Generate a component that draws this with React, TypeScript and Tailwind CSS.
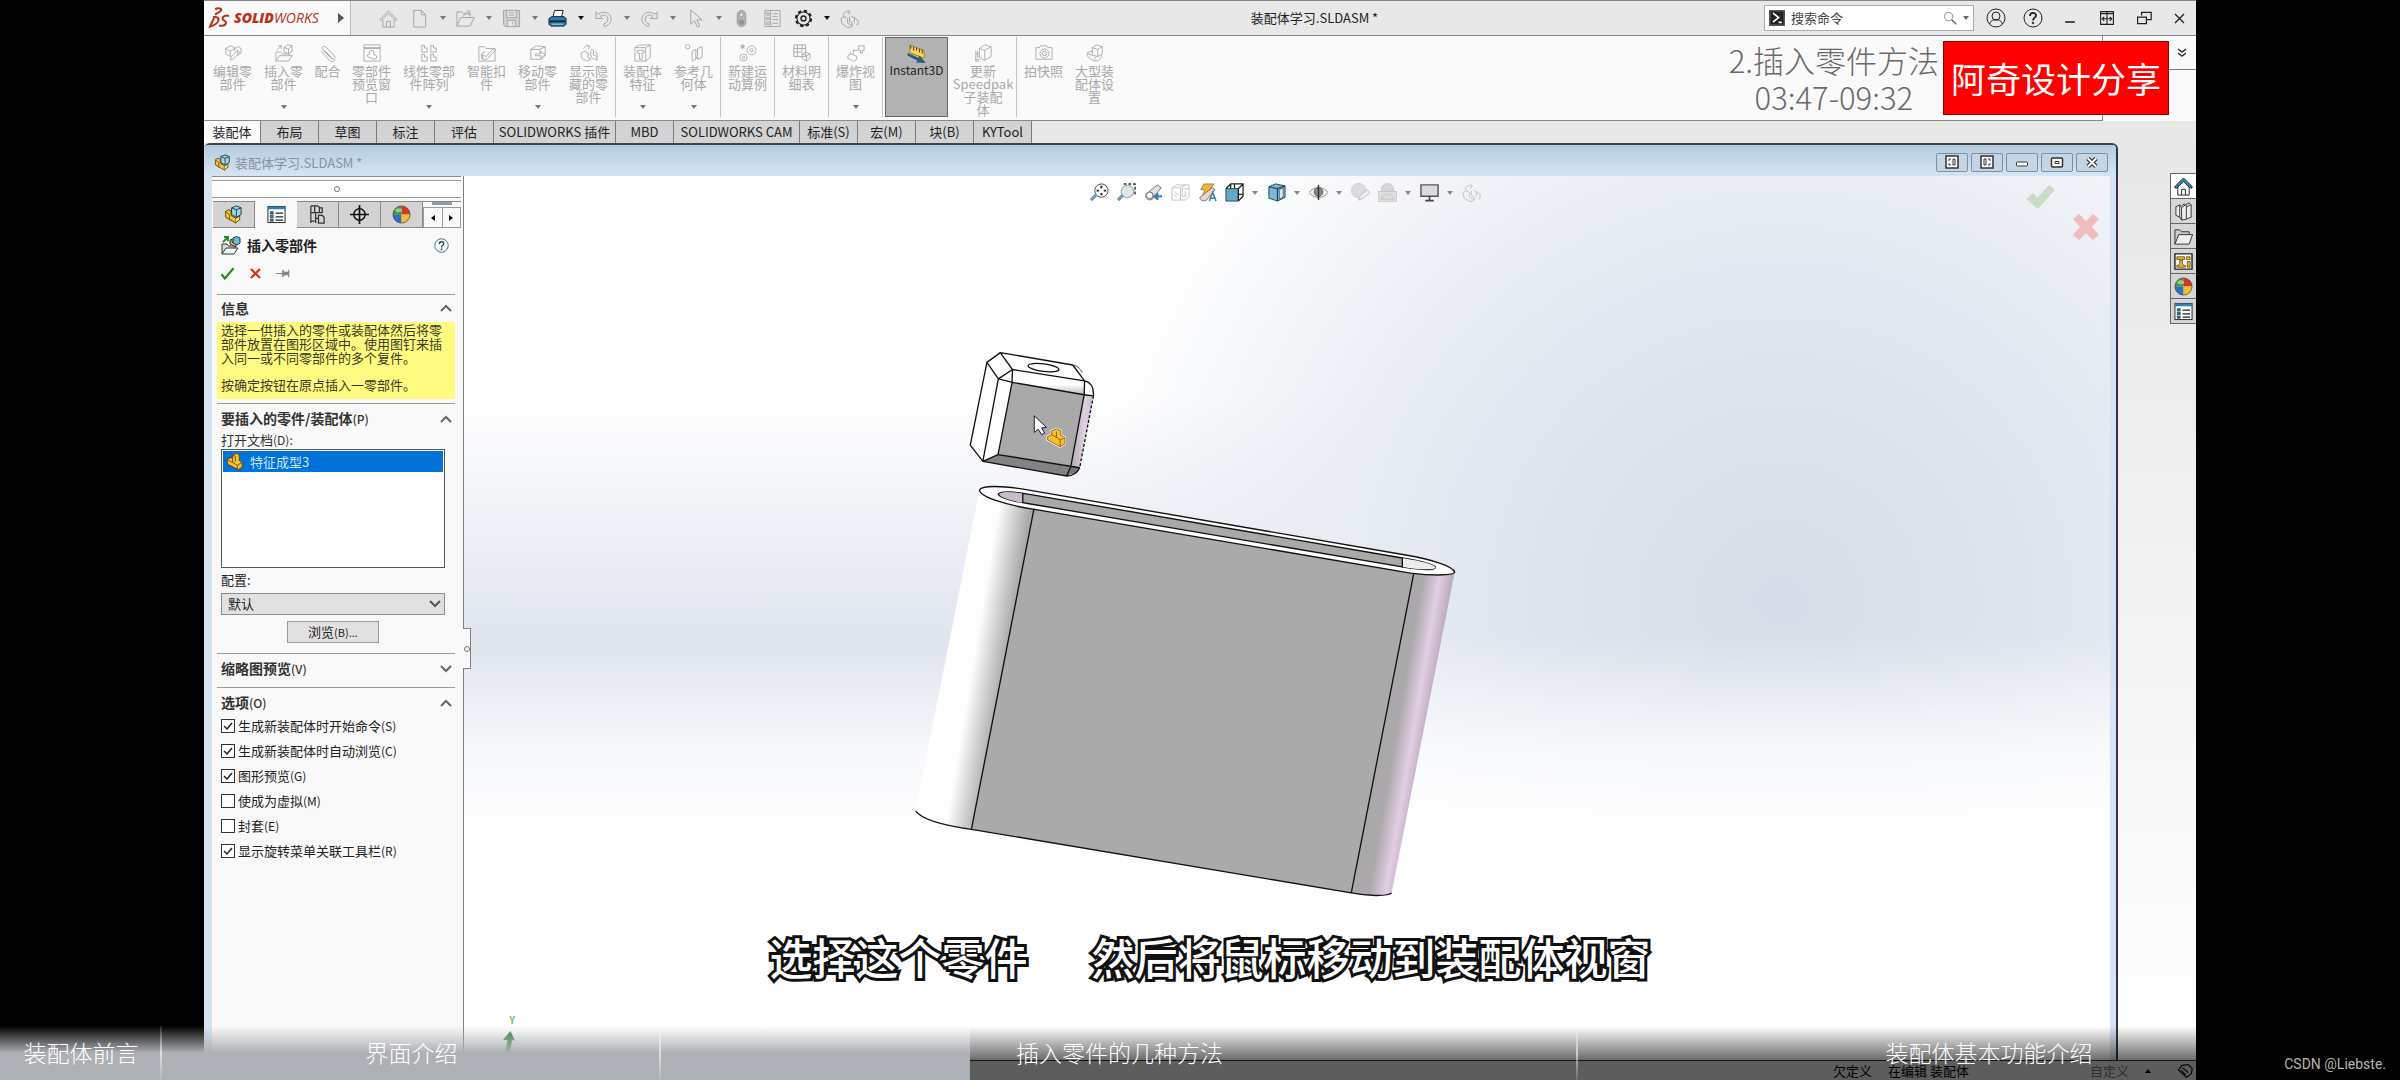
import { useState } from "react";
import type { ReactNode } from "react";
import clsx from "clsx";

/* ---------- icons ---------- */

const partShape = (
  <>
    <path d="M2 8l4-2 2 1V3l4-1.500L15 3v6l3 2v5l-4 2.500L3 13z" fill="#f4c232" stroke="#6b4a05" strokeWidth="1" />
    <path d="M8 7v4l5 3v4M8 3l3 1.500V10M13 14l5-3M2 8l6 3" fill="none" stroke="#6b4a05" strokeWidth=".9" />
  </>
);

const asmShape = (
  <>
    <path d="M1.500 7l3-2 3 1v5l5 3v5L2 13z" fill="#f4c232" stroke="#5e4306" strokeWidth="1" />
    <path d="M1.500 7l4 3v6M12.500 14l4-2.500v4l-4 3" fill="#ffdf6b" stroke="#5e4306" strokeWidth="1" />
    <path d="M8 3l5-2 5 2v7l-5 3-5-3z" fill="#9fd3ec" stroke="#1c3a4a" strokeWidth="1" />
    <path d="M8 3l5 2 5-2M13 5v8" fill="none" stroke="#1c3a4a" strokeWidth="1" />
  </>
);

const icons: Record<string, ReactNode> = {
  home: <path d="M1 11l9-9 9 9-1.500 1L10 4.500 2.500 12zM4 11v8h12v-8M8 19v-6h4v6" />,
  file: <path d="M4 1.500h8l4.500 4.500v13H4zM12 1.500V6h4.500" />,
  open: <path d="M1 18V3h5l2 2h7v3M1 18l4-9h14l-4 9zM8 8c1-4 3-5 6-5M12 1l3 2-2 3" />,
  save: (
    <>
      <path d="M1.500 1.500h17v17h-15l-2-2z" fill="#cfcfcf" />
      <path d="M5 2v7h10V2M6 18v-6h8v6M11 13.500v3M7 4h6M7 6.500h6" fill="#e8e8e8" />
    </>
  ),
  print: (
    <>
      <path d="M5 9L7 1.500h9L14 9z" fill="#fff" stroke="#111" />
      <path d="M1 10l3-2h13l2 2v6l-2 2H3l-2-2z" fill="#2d7fae" stroke="#0b2433" />
      <path d="M2 13h16" stroke="#0b2433" strokeWidth="2" />
      <path d="M4 16h12" stroke="#9fd3ec" />
    </>
  ),
  undo: <path d="M2 3v7h7L6.500 7.500C10 5 15 7 14.500 11c-.3 3-2 4-4.500 5l1 2.500c4-1 7-4 7-8C18 4 10 1 4.500 5.500z" />,
  redo: <path d="M18 3v7h-7l2.500-2.500C10 5 5 7 5.500 11c.3 3 2 4 4.500 5l-1 2.500c-4-1-7-4-7-8C2 4 10 1 15.500 5.500z" />,
  cursor: <path d="M5 1v15l4-3.500 3 6.500 2.500-1-3-6.500H17z" />,
  traffic: (
    <>
      <rect x="5.500" y="1.500" width="9" height="17" rx="4.500" fill="#b4b4b4" stroke="#999" />
      <circle cx="10" cy="6" r="2" fill="#eee" stroke="#999" />
      <circle cx="10" cy="14" r="2.200" fill="#999" stroke="#888" />
    </>
  ),
  list: <path d="M2 1.500h16v17H2zM8 2v16M4 4h2.500v2.500H4zM4 9h2.500v2.500H4zM4 14h2.500v2.500H4zM10 5h6M10 8h5M10 11h6M10 15h6" />,
  gear: (
    <>
      <circle cx="10" cy="10" r="7.800" stroke="#222" strokeWidth="2.600" strokeDasharray="3.500 2.630" />
      <circle cx="10" cy="10" r="6.900" fill="#e8e8e8" stroke="#222" strokeWidth="1.200" />
      <circle cx="10" cy="10" r="2.600" stroke="#222" strokeWidth="1.500" />
    </>
  ),
  rebuild: (
    <path d="M3 6c1-3 4-4 7-2.500M8 1l3 2.500L8 6M1 10l4-2 3 2v5l4 2v2l-4 .5-6-4zM12 8l3 1v5M15 9l4 3v4l-2 1M10 8v5l3 2v3M4 6v3" />
  ),
  editPart: (
    <path d="M2 5l5-3 5 2v4M2 5l5 3v6M2 5v6l5 3M7 8l5-3M12 5l4-2 3 2v5l-4 3M15 7v4M7 18l1-4 7-7 2.500 2.500-7 7z" />
  ),
  insert: <path d="M1 19V9h5l2 2h8v2M1 19l4-6h14l-4 6zM2 7l5-5M3.500 2H7v3.500M10 4l4-3 5 1v6l-4 3-5-2zM10 4l5 1.500V11M15 5.500L19 2" />,
  clip: <path d="M15 17L5 7c-3-3 0-6 3-3.500l9 9.500c2 2.500-.5 5-3 3L4.500 6.500M2.500 8l9 10c3 2 6 2 6.500-1M7 8l7 7" />,
  previewWin: <path d="M1 1h18v18H1zM1 4h18M1 5h18M5 12l2-1v-3l3-1 2 1v4l3 1v3l-3 1-7-3z" />,
  pattern: (
    <path d="M2 1.500h3v3h3V9H2zM12 1.500h3v3h3V9h-6zM2 11.500h3v3h3V19H2zM12 11.500h3v3h3V19h-6z" />
  ),
  fastener: <path d="M1 3h6l2 2h10v14H1zM4 17v-6l4-3M5 12l4 2 8-9 2 2-8 9-5 2z" />,
  move: <path d="M2 6l6-4 10 1v10l-5 4H2zM2 6h10l6-3M12 6v4M7 11h6V8l5 4-5 4v-3H7z" />,
  showHide: <path d="M4 5c2-4 5-3 7-2M8 1l3 2-2 3M1 10l4-2 4 2v5l3 2-4 2-6-3zM12 6l3 1v5l4 2v4l-4-2M12 8v5l2 4M17 9l2 1v4" />,
  feature: <path d="M1 4l5-3h12v14l-5 4H1zM1 4h12l5-3M13 4v15M4 7h7v3H9v7H6v-7H4z" />,
  refGeo: (
    <>
      <circle cx="3" cy="3" r="2.500" />
      <path d="M8 8l4-2v11l-4 2zM14 5l5-2v12l-5 2zM12 8h2M12 15h2" />
    </>
  ),
  motion: (
    <>
      <circle cx="14" cy="7" r="5" />
      <circle cx="14" cy="7" r="1.800" />
      <circle cx="5" cy="15" r="4" />
      <circle cx="5" cy="15" r="1.300" />
      <path d="M1 3h6M4 0v6M2 1l4 4M6 1L2 5" />
    </>
  ),
  bom: <path d="M1 1h13v13H1zM1 5h13M1 9h9M5 1v13M10 1v8M10 11l4-2 5 2v5l-4 3-5-3zM10 11l5 2v6M15 13l4-2" />,
  explode: <path d="M1 13l3-2 3 1 4 2v3l-4 2-6-3zM13 2h6v5h-2v3h-2V7h-2zM7 11v-4h5M4 11V9" />,
  instant3d: (
    <>
      <path d="M3 1l15 6v8L3 9z" fill="#ffd457" stroke="#a07b16" />
      <path d="M4 2v3M7 3v4M10 4v3M13 5v4M16 6v4" stroke="#333" />
      <path d="M1 10l12 5.500v-3l6 7-9-.5 2-1.500L1 12z" fill="#1f5f86" stroke="#17435e" strokeWidth=".6" />
    </>
  ),
  speedpak: <path d="M6 5l6-4 7 2v11l-7 4-6-3zM6 5l6 2v11M12 7l7-4M2 7v12h4M2 11h3M4 8v7M1 17h5" />,
  camera: (
    <>
      <path d="M1 4h4l1-2h7l1 2h5v13H1z" />
      <circle cx="10.500" cy="10.500" r="5" />
      <circle cx="10.500" cy="10.500" r="2.500" />
    </>
  ),
  largeAsm: <path d="M7 4l5-3 6 2v8l-5 3-6-2zM7 4l6 2v8M13 6l5-3M7 8l-5 1-1 4 6 5 6 1 4-4v-3M2 10l5 3M10 14v3" />,
  cmd: (
    <>
      <rect x="1" y="1" width="18" height="18" fill="#222" stroke="#555" strokeWidth="2" />
      <path d="M5 4l7 5.500L5 15M12 15.500h4" stroke="#fff" strokeWidth="2" />
    </>
  ),
  search: (
    <>
      <circle cx="8" cy="8" r="6" />
      <path d="M12.500 12.500L19 19" strokeWidth="2" />
    </>
  ),
  user: (
    <>
      <circle cx="10" cy="10" r="9" />
      <circle cx="10" cy="8" r="4" />
      <path d="M3.500 16c1-3 3-4 4-4h5c1 0 3 1 4 4" />
    </>
  ),
  help: (
    <>
      <circle cx="10" cy="10" r="9" />
      <path d="M7 8c0-4 6-4 6-.5 0 2-3 2.500-3 5" strokeWidth="1.800" />
      <circle cx="10" cy="15" r=".8" fill="currentColor" />
    </>
  ),
  min: <path d="M4 15h12" strokeWidth="2" />,
  span: <path d="M2 2h16v16H2zM10 2v16M2 4.500h16M4 11h12M6.500 8.500L4 11l2.500 2.500M13.500 8.500L16 11l-2.500 2.500" strokeWidth="1.400" />,
  restore: <path d="M7 7V3h12v9h-6M2 9h11v8H2z" strokeWidth="1.500" />,
  close: <path d="M4 4l12 12M16 4L4 16" strokeWidth="1.800" />,
  asm: asmShape,
  part: partShape,
  props: (
    <>
      <rect x="1" y="1.500" width="18" height="17" fill="#fff" stroke="#222" />
      <path d="M1 3h18" stroke="#2d7fae" strokeWidth="3" />
      <path d="M3.500 7h3v2.500h-3zM3.500 11h3v2.500h-3zM3.500 15h3v2h-3z" fill="#2d7fae" stroke="#1c3a4a" strokeWidth=".8" />
      <path d="M9 8.500h8M9 12.500h8M9 16h8" stroke="#222" strokeWidth="1.300" />
    </>
  ),
  config: <path d="M3 1v18M3 1h5M3 17h4M3 8h4M7 1h3l2 1.500V8H7zM12 3h3v5h-3M8 9v10M11 11h4l2 2v6h-6zM8 14h3" stroke="#333" strokeWidth="1.300" />,
  target: (
    <>
      <circle cx="10" cy="10" r="6" stroke="#111" strokeWidth="1.600" />
      <path d="M10 0v20M0 10h20" stroke="#111" strokeWidth="1.800" />
    </>
  ),
  ball: (
    <>
      <path d="M10 10V1a9 9 0 0 0-9 9z" fill="#3d9b35" stroke="none" />
      <path d="M10 10V1a9 9 0 0 1 9 9z" fill="#d7352a" stroke="none" />
      <path d="M10 10H1a9 9 0 0 0 9 9z" fill="#2d6fc4" stroke="none" />
      <path d="M10 10h9a9 9 0 0 1-9 9z" fill="#f0c02a" stroke="none" />
      <circle cx="10" cy="10" r="9" stroke="#333" strokeWidth=".7" />
      <ellipse cx="7" cy="5.500" rx="3.500" ry="2.200" fill="#fff" fillOpacity=".45" stroke="none" />
    </>
  ),
  insertColor: (
    <>
      <path d="M1 19V9h5l1.500 2H14v2" fill="#ddd" stroke="#333" />
      <path d="M1 19l4-6h12l-4 6z" fill="#f4f4f4" stroke="#333" />
      <path d="M2 7l4.500-4.500M3 2h4v4" stroke="#1f8a2d" strokeWidth="1.800" />
      <path d="M9 5l2-1v3l4 2v3l-6-3z" fill="#f4c232" stroke="#333" />
      <path d="M12 3l3.500-1.500L19 3v5l-3.500 2L12 8z" fill="#6db7dd" stroke="#1c3a4a" />
    </>
  ),
  ok: <path d="M2 11l4.500 5.500L18 3" stroke="#2c8a1d" strokeWidth="3" />,
  cancel: <path d="M3 3l14 14M17 3L3 17" stroke="#cf2a12" strokeWidth="3.200" />,
  pin: <path d="M0 10h9M9 5v10M9 7l3 1.500h4v3h-4L9 13zM17 5v10" fill="#888" stroke="#888" strokeWidth="1.600" />,
  zoomFit: (
    <>
      <circle cx="12" cy="8" r="7" fill="#fff" stroke="#444" />
      <path d="M7 12L1 18" stroke="#6e9cb5" strokeWidth="3.500" />
      <path d="M12 3v2.500M12 10.500V13M7 8h2.500M14.500 8H17" stroke="#222" strokeWidth="2" />
    </>
  ),
  zoomArea: (
    <>
      <path d="M7 1h12v12" stroke="#333" strokeDasharray="3 2" strokeWidth="1.500" />
      <circle cx="11" cy="9" r="6.500" fill="#dde7e6" stroke="#8b9c9c" />
      <path d="M6 13l-5 5" stroke="#6e9cb5" strokeWidth="3.500" />
    </>
  ),
  prevView: (
    <>
      <path d="M2 12L14 2l4 3-9 12c-4 2-8 0-7-5z" fill="#e3e3e3" stroke="#777" />
      <circle cx="6" cy="13" r="3.500" fill="#fff" stroke="#666" />
      <path d="M19 14h-6M15 11l-4 3 4 3.500" stroke="#3e7ea3" strokeWidth="2.400" />
    </>
  ),
  section: <path d="M1 5l5-3h13v12l-4 4H1zM1 5h9v13M10 5l5-3M12 6h7M3 8l5 5M3 12l4 4M12 6v8h3V8" />,
  annot: (
    <>
      <path d="M6 1h11l-4 5h3L5 13l2-6H3z" fill="#f2b33b" stroke="#96722b" strokeWidth=".8" />
      <path d="M2 15L15 5l3 2-9 11c-4 2-7 0-7-3z" fill="#e2d7cf" stroke="#7d6f68" />
      <path d="M12 19l3.500-9L19 19M13 16h5" stroke="#3e7ea3" strokeWidth="1.600" />
    </>
  ),
  viewCube: (
    <>
      <path d="M1 6h13v13H1z" fill="#63a9c9" stroke="#23495c" />
      <path d="M1 6l5-5h13v13l-5 5M14 6l5-5M6 1v5M14 12h5M10 1v5M14 6v13" stroke="#222" strokeWidth="1.300" />
    </>
  ),
  displayStyle: (
    <>
      <path d="M2 4l7-3 10 2v12l-8 4-9-3z" fill="#7cb9d3" stroke="#23495c" />
      <path d="M2 4l9 2v13M11 6l8-3" stroke="#23495c" strokeWidth="1.300" />
      <path d="M13 7l4-2v10l-4 2z" fill="#d6eaf3" stroke="#23495c" strokeWidth=".7" />
    </>
  ),
  eye: (
    <>
      <path d="M0 10c5-7 15-7 20 0-5 7-15 7-20 0z" fill="#f2f2f2" stroke="#8a8a8a" />
      <circle cx="10" cy="9.500" r="4.500" fill="#8b8b8b" stroke="#555" />
      <path d="M10 2v16" stroke="#333" strokeWidth="1.500" />
    </>
  ),
  appearance: (
    <>
      <circle cx="8" cy="8" r="7.500" fill="#dcdcdc" stroke="#cfcfcf" />
      <path d="M8 18l2-5 7-6 3 3-7 6z" fill="#eee" stroke="#bbb" />
    </>
  ),
  scene: (
    <>
      <circle cx="10" cy="7" r="6.500" fill="#d6d6d6" stroke="#c9c9c9" />
      <path d="M0 9h20v11H0zM3 17l4-5h6l4 5z" fill="#dedede" stroke="#c3c3c3" />
    </>
  ),
  monitor: (
    <>
      <path d="M1 2h18v12H1z" fill="#dcdcdc" stroke="#555" strokeWidth="1.500" />
      <path d="M10 14v4M5.500 18.500h9" stroke="#444" strokeWidth="1.800" />
    </>
  ),
  houseColor: (
    <>
      <path d="M4 10v9h12v-9" fill="#fff" stroke="#222" />
      <path d="M1 10l9-9 9 9v1.500h-2L10 5l-7 6.500H1z" fill="#3a88b5" stroke="#123" />
      <path d="M8 19v-6h4v6" stroke="#222" />
    </>
  ),
  library: <path d="M2 5l4-2v13l-4-2zM6 3l2 3v13l-2-3M8 6l4-3M8 4l3-2 2 2v14l-5 1M12 3l4-2 2 2v13l-5 2M13 5l5-2" fill="#eee" stroke="#333" />,
  folder: (
    <>
      <path d="M1 18V3h5l2 2h8v3" fill="#ccc" stroke="#333" />
      <path d="M1 18L5 8h14.500L16 18z" fill="#eee" stroke="#333" />
    </>
  ),
  palette: (
    <>
      <path d="M1 2h18v16H1z" fill="#fff" stroke="#222" strokeWidth="1.500" />
      <path d="M3 5h8v3H3zM13 5h4v3h-4zM3 14h2l1-2V9h3v3l1 2h2v2H3zM14 10h3v6h-3z" fill="#e9b42c" stroke="#5e4306" strokeWidth=".8" />
    </>
  ),
  tag: (
    <path d="M2 9l4-6 8-1 5 5-1 6-6 5zM5 9l6 6M7 6l7 6" stroke="#111" strokeWidth="1.500" />
  ),
};

function Icon({ name, className }: { name: string; className?: string }) {
  return (
    <svg viewBox="0 0 20 20" fill="none" stroke="currentColor" strokeWidth="1" aria-hidden="true" className={clsx("shrink-0", className)}>
      {icons[name]}
    </svg>
  );
}

function Caret({ className }: { className?: string }) {
  return (
    <svg viewBox="0 0 6 4" aria-hidden="true" className={clsx("h-1 w-1.5 shrink-0", className)}>
      <path d="M0 0h6L3 4z" fill="currentColor" />
    </svg>
  );
}

function Chevron({ up, className }: { up?: boolean; className?: string }) {
  return (
    <svg viewBox="0 0 12 8" fill="none" stroke="currentColor" strokeWidth="2" aria-hidden="true" className={clsx("h-2 w-3 shrink-0", className)}>
      <path d={up ? "M1 7l5-5 5 5" : "M1 1l5 5 5-5"} />
    </svg>
  );
}

/* ---------- title bar ---------- */

type Tool = { icon: string; label: string; caret?: boolean; on?: boolean; faded?: boolean };

const quickTools: Tool[] = [
  { icon: "home", label: "主页" },
  { icon: "file", label: "新建", caret: true },
  { icon: "open", label: "打开", caret: true },
  { icon: "save", label: "保存", caret: true },
  { icon: "print", label: "打印", caret: true, on: true },
  { icon: "undo", label: "撤销", caret: true },
  { icon: "redo", label: "重做", caret: true },
  { icon: "cursor", label: "选择", caret: true },
  { icon: "traffic", label: "重建模型" },
  { icon: "list", label: "文件属性" },
  { icon: "gear", label: "选项", caret: true, on: true },
  { icon: "rebuild", label: "更新" },
];

const windowTools = [
  { icon: "user", label: "登录", size: "size-5" },
  { icon: "help", label: "帮助", size: "size-5" },
  { icon: "min", label: "最小化", size: "size-4" },
  { icon: "span", label: "跨屏", size: "size-4" },
  { icon: "restore", label: "还原", size: "size-4" },
];

function TitleBar() {
  return (
    <header className="flex h-9 items-stretch border-t border-b border-[#858585] bg-[#e8e8e8]">
      <div className="flex w-[147px] items-center border-r border-[#bdbdbd] bg-[#f9f9f9] pl-1">
        <svg viewBox="0 0 22 22" fill="none" stroke="#b8321c" strokeWidth="2" className="size-[22px]" aria-hidden="true">
          <path d="M7 2c5-1.500 8 0 5 2.500-2 1.500-3 2-5 3" />
          <path d="M5 10h3c4 1 3 5-1 7.500-1.500 1-3 1.500-5 2L6 11" />
          <path d="M21 9c-3-1-6.500 0-6.500 2.500s4 2 3.500 4.500c-.5 2.500-4 3-7 2.500" />
        </svg>
        <span className="ml-1 font-['Open_Sans',sans-serif] text-[14px] leading-4 text-[#b8321c] italic">
          <b className="font-extrabold">SOLID</b>WORKS
        </span>
        <svg viewBox="0 0 6 10" className="mr-1.5 ml-auto h-2.5 w-1.5" aria-hidden="true">
          <path d="M0 0l6 5-6 5z" fill="#555" />
        </svg>
      </div>
      <div className="flex items-center pl-[22px]">
        {quickTools.map((t) => (
          <div key={t.icon} className={clsx("flex items-center", t.on ? "text-[#111]" : "text-[#a3a3a3]")}>
            <button aria-label={t.label} className="flex w-[31px] justify-center">
              <Icon name={t.icon} className="size-[19px]" />
            </button>
            {t.caret && (
              <span className={clsx("flex w-[15px] justify-center", !t.on && "text-[#777]")}>
                <Caret />
              </span>
            )}
          </div>
        ))}
      </div>
      <h1 className="flex-1 self-center text-center text-[13px] leading-4 text-[#222]">装配体学习.SLDASM *</h1>
      <div className="my-1 flex w-[210px] items-center gap-1.5 border border-[#ababab] bg-white px-1">
        <Icon name="cmd" className="size-4" />
        <input aria-label="搜索命令" placeholder="搜索命令" className="min-w-0 flex-1 text-[13px] leading-4 outline-none placeholder:text-[#444]" />
        <Icon name="search" className="size-3.5 text-[#666]" />
        <Caret className="text-[#666]" />
      </div>
      <div className="flex items-center pl-[3px] text-[#222]">
        {windowTools.map((t) => (
          <button key={t.icon} aria-label={t.label} className="flex w-[37px] justify-center">
            <Icon name={t.icon} className={t.size} />
          </button>
        ))}
        <button aria-label="关闭" className="flex w-[34px] justify-center">
          <Icon name="close" className="size-[15px]" />
        </button>
      </div>
    </header>
  );
}

/* ---------- command ribbon ---------- */

type Command = { icon: string; lines: string[]; width: string; caret?: boolean };

const commandGroups: Command[][] = [
  [
    { icon: "editPart", lines: ["编辑零", "部件"], width: "w-[51px]" },
    { icon: "insert", lines: ["插入零", "部件"], width: "w-[51px]", caret: true },
    { icon: "clip", lines: ["配合"], width: "w-[37px]" },
    { icon: "previewWin", lines: ["零部件", "预览窗", "口"], width: "w-[51px]" },
    { icon: "pattern", lines: ["线性零部", "件阵列"], width: "w-[64px]", caret: true },
    { icon: "fastener", lines: ["智能扣", "件"], width: "w-[51px]" },
    { icon: "move", lines: ["移动零", "部件"], width: "w-[51px]", caret: true },
    { icon: "showHide", lines: ["显示隐", "藏的零", "部件"], width: "w-[51px]" },
  ],
  [
    { icon: "feature", lines: ["装配体", "特征"], width: "w-[51px]", caret: true },
    { icon: "refGeo", lines: ["参考几", "何体"], width: "w-[51px]", caret: true },
  ],
  [{ icon: "motion", lines: ["新建运", "动算例"], width: "w-[51px]" }],
  [{ icon: "bom", lines: ["材料明", "细表"], width: "w-[51px]" }],
  [{ icon: "explode", lines: ["爆炸视", "图"], width: "w-[51px]", caret: true }],
];

const moreGroups: Command[][] = [
  [{ icon: "speedpak", lines: ["更新", "Speedpak", "子装配", "体"], width: "w-[64px]" }],
  [
    { icon: "camera", lines: ["拍快照"], width: "w-[51px]" },
    { icon: "largeAsm", lines: ["大型装", "配体设", "置"], width: "w-[51px]" },
  ],
];

function CommandButton({ cmd }: { cmd: Command }) {
  return (
    <button className={clsx("flex flex-col items-center pt-[7px] text-[13px] leading-[13px] text-[#a9a9a9]", cmd.width)}>
      <Icon name={cmd.icon} className="mb-[2px] size-[18px]" />
      {cmd.lines.map((line) => (
        <span key={line} className="whitespace-nowrap">{line}</span>
      ))}
      {cmd.caret && <Caret className="mt-auto mb-2 text-[#777]" />}
    </button>
  );
}

function CommandGroup({ group, last }: { group: Command[]; last?: boolean }) {
  return (
    <div className={clsx("flex px-px", !last && "border-r border-[#c4c4c4]")}>
      {group.map((cmd) => (
        <CommandButton key={cmd.icon} cmd={cmd} />
      ))}
    </div>
  );
}

function Ribbon() {
  return (
    <div className="flex h-[85px] bg-[#fafafa]">
      <div className="flex flex-1 border-r border-b border-[#8a8a8a] pt-px pb-[3px] pl-0.5">
        {commandGroups.map((g) => (
          <CommandGroup key={g[0].icon} group={g} />
        ))}
        <button className="mx-0.5 flex w-[63px] flex-col items-center border border-[#666] bg-[#b2b2b2] pt-1.5 text-[12px] leading-[14px] text-[#222]">
          <Icon name="instant3d" className="size-[19px]" />
          Instant3D
        </button>
        {moreGroups.map((g, i) => (
          <CommandGroup key={g[0].icon} group={g} last={i === 1} />
        ))}
      </div>
      <div className="w-[93px]">
        <button aria-label="更多" className="flex h-[34px] w-full items-center justify-end border-b border-[#777] pr-2.5 text-[#333]">
          <svg viewBox="0 0 8 10" fill="none" stroke="currentColor" strokeWidth="1.500" className="h-2.5 w-2" aria-hidden="true">
            <path d="M0 1l4 3 4-3M0 5l4 3 4-3" />
          </svg>
        </button>
      </div>
    </div>
  );
}

const tabs = [
  { name: "装配体", width: "w-[57px]" },
  { name: "布局", width: "w-[58px]" },
  { name: "草图", width: "w-[58px]" },
  { name: "标注", width: "w-[58px]" },
  { name: "评估", width: "w-[59px]" },
  { name: "SOLIDWORKS 插件", width: "w-[122px]" },
  { name: "MBD", width: "w-[58px]" },
  { name: "SOLIDWORKS CAM", width: "w-[126px]" },
  { name: "标准(S)", width: "w-[58px]" },
  { name: "宏(M)", width: "w-[58px]" },
  { name: "块(B)", width: "w-[58px]" },
  { name: "KYTool", width: "w-[58px]" },
];

function RibbonTabs() {
  const [active, setActive] = useState("装配体");
  return (
    <nav role="tablist" className="flex h-[22px] bg-[#e8e8e8]">
      {tabs.map((t) => (
        <button
          key={t.name}
          role="tab"
          aria-selected={t.name === active}
          onClick={() => setActive(t.name)}
          className={clsx(
            "border-r border-[#7c7c7c] text-[13px] leading-5 whitespace-nowrap text-[#222]",
            t.width,
            t.name === active ? "bg-[#fafafa]" : "bg-[#d3d3d3]"
          )}
        >
          {t.name}
        </button>
      ))}
    </nav>
  );
}

/* ---------- property manager ---------- */

function SectionHead({ title, hotkey, open }: { title: string; hotkey?: string; open?: boolean }) {
  return (
    <h3 className="flex items-center justify-between pr-[3px] pl-1 text-[14px] leading-5 font-bold text-[#333]">
      <span>
        {title}
        {hotkey && <span className="text-[12px] font-medium">({hotkey})</span>}
      </span>
      <button aria-label={title} className="text-[#666]">
        <Chevron up={open} />
      </button>
    </h3>
  );
}

function CheckRow({ label, hotkey, checked }: { label: string; hotkey: string; checked?: boolean }) {
  return (
    <label className="flex h-[25px] items-center gap-[3px] pl-1 text-[13px] leading-4 text-[#222]">
      <span className="relative size-[14px] shrink-0">
        <input type="checkbox" defaultChecked={checked} className="peer block size-[14px] appearance-none border border-[#333] bg-white" />
        <svg viewBox="0 0 14 14" fill="none" stroke="#222" strokeWidth="1.500" className="pointer-events-none absolute inset-0 hidden peer-checked:block" aria-hidden="true">
          <path d="M3 7l3 3 5-6" />
        </svg>
      </span>
      <span>
        {label}
        <span className="text-[12px]">({hotkey})</span>
      </span>
    </label>
  );
}

const options = [
  { label: "生成新装配体时开始命令", hotkey: "S", checked: true },
  { label: "生成新装配体时自动浏览", hotkey: "C", checked: true },
  { label: "图形预览", hotkey: "G", checked: true },
  { label: "使成为虚拟", hotkey: "M" },
  { label: "封套", hotkey: "E" },
  { label: "显示旋转菜单关联工具栏", hotkey: "R", checked: true },
];

const managerTabs = ["asm", "props", "config", "target", "ball"];

function PropertyManager() {
  return (
    <aside className="relative z-10 w-[252px] shrink-0 border-r border-[#808080] bg-[#f9f9f9] pr-0.5">
      <div className="flex h-[22px] items-center justify-center border-t border-[#8b8b8b] pt-[3px]">
        <div className="flex h-full w-full items-center justify-center border-t border-b border-[#9c9c9c] bg-white">
          <span className="size-[6px] rounded-full border border-[#777]" />
        </div>
      </div>
      <div className="mt-[3px] flex h-[27px] pl-px">
        {managerTabs.map((t) => (
          <button
            key={t}
            aria-label={t}
            className={clsx(
              "flex w-[42px] items-center justify-center",
              t === "props" ? "bg-[#f9f9f9]" : "border-t border-r border-b border-[#8a8a8a] bg-[#d3d3d3]"
            )}
          >
            <Icon name={t} className="size-[19px]" />
          </button>
        ))}
        <div className="flex flex-1 flex-col border-t border-[#8a8a8a]">
          <span className="mx-auto h-[3px] w-5 bg-[#8aa0b0]" />
          <div className="mt-0.5 flex flex-1 border border-[#9a9a9a]">
            <button aria-label="向左" className="flex flex-1 items-center justify-center border-r border-[#9a9a9a]">
              <Caret className="rotate-90" />
            </button>
            <button aria-label="向右" className="flex flex-1 items-center justify-center">
              <Caret className="-rotate-90" />
            </button>
          </div>
        </div>
      </div>

      <div className="pr-[6px] pl-[5px]">
        <div className="flex h-[34px] items-center pr-[6px] pl-1">
          <Icon name="insertColor" className="size-5" />
          <h2 className="ml-1.5 text-[14px] leading-5 font-bold text-[#222]">插入零部件</h2>
          <button aria-label="帮助" className="ml-auto text-[#1f4e6b]">
            <Icon name="help" className="size-[15px]" />
          </button>
        </div>
        <div className="flex h-[22px] items-center gap-3.5 pl-[3px]">
          <button aria-label="确定"><Icon name="ok" className="size-[15px]" /></button>
          <button aria-label="取消"><Icon name="cancel" className="size-[13px]" /></button>
          <button aria-label="保持可见"><Icon name="pin" className="size-[15px]" /></button>
        </div>

        <section className="mt-[10px] border-t border-[#9a9a9a] pt-[3px] pb-1">
          <SectionHead title="信息" open />
          <div className="mt-[4px] bg-[#fffa80] pt-px pr-1 pb-[7px] pl-1 text-[13px] leading-[14px] text-[#3b3a20]">
            <p>选择一供插入的零件或装配体然后将零部件放置在图形区域中。使用图钉来插入同一或不同零部件的多个复件。</p>
            <p className="mt-[13px]">按确定按钮在原点插入一零部件。</p>
          </div>
        </section>

        <section className="border-t border-[#9a9a9a] pt-[4px] pb-[10px]">
          <SectionHead title="要插入的零件/装配体" hotkey="P" open />
          <p id="open-docs" className="mt-[2px] pl-1 text-[13px] leading-[18px] text-[#333]">
            打开文档<span className="text-[12px]">(D):</span>
          </p>
          <div className="mr-2.5 ml-1">
            <ul role="listbox" aria-labelledby="open-docs" className="h-[119px] border border-[#555] bg-white p-px">
              <li role="option" aria-selected="true" className="flex h-[21px] items-center gap-1.5 bg-[#0073d8] pl-0.5 text-[13px] leading-4 text-[#cfe6fa]">
                <Icon name="part" className="size-[19px]" />
                特征成型3
              </li>
            </ul>
            <label htmlFor="config" className="mt-[3px] block text-[13px] leading-[18px] text-[#222]">配置:</label>
            <div className="relative mt-1">
              <select id="config" className="block h-[22px] w-full appearance-none border border-[#8f8f8f] bg-[#e1e1e1] pl-1.5 text-[13px] leading-4 text-[#222]">
                <option>默认</option>
              </select>
              <Chevron className="pointer-events-none absolute inset-y-0 right-1 my-auto text-[#555]" />
            </div>
            <button className="mx-auto mt-[6px] block h-[22px] w-[92px] border border-[#9c9c9c] bg-[#e1e1e1] text-[13px] leading-5 text-[#222]">
              浏览<span className="text-[11px]">(B)...</span>
            </button>
          </div>
        </section>

        <section className="border-t border-[#9a9a9a] pt-[4px] pb-[8px]">
          <SectionHead title="缩略图预览" hotkey="V" />
        </section>

        <section className="border-t border-[#9a9a9a] pt-[4px]">
          <SectionHead title="选项" hotkey="O" open />
          {options.map((o) => (
            <CheckRow key={o.hotkey} {...o} />
          ))}
        </section>
      </div>

      <button aria-label="折叠面板" className="absolute top-[452px] left-full flex h-[41px] w-2 items-center justify-center border border-l-0 border-[#808080] bg-[#f9f9f9]">
        <span className="size-[6px] rounded-full border border-[#777]" />
      </button>
    </aside>
  );
}

/* ---------- graphics area ---------- */

const viewTools: Tool[] = [
  { icon: "zoomFit", label: "整屏显示全图" },
  { icon: "zoomArea", label: "局部放大" },
  { icon: "prevView", label: "上一视图" },
  { icon: "section", label: "剖面视图", faded: true },
  { icon: "annot", label: "动态注解视图" },
  { icon: "viewCube", label: "视图定向", caret: true },
  { icon: "displayStyle", label: "显示样式", caret: true },
  { icon: "eye", label: "隐藏/显示项目", caret: true },
  { icon: "appearance", label: "编辑外观", faded: true },
  { icon: "scene", label: "应用布景", caret: true, faded: true },
  { icon: "monitor", label: "视图设定", caret: true },
  { icon: "rebuild", label: "重建", faded: true },
];

function Model() {
  return (
    <svg viewBox="0 0 1568 1568" preserveAspectRatio="none" className="absolute top-[154px] left-[436px] h-[590px] w-[580px]" fill="none" stroke="#111" strokeWidth="3.600" strokeLinejoin="round" role="img" aria-label="模型">
      <defs>
        <linearGradient id="roundLeft" gradientUnits="userSpaceOnUse" x1="130" y1="860" x2="285" y2="886">
          <stop offset="0" stopColor="#fff" />
          <stop offset=".45" stopColor="#fdfdfd" />
          <stop offset="1" stopColor="#a9a9a9" />
        </linearGradient>
        <linearGradient id="roundRight" gradientUnits="userSpaceOnUse" x1="1310" y1="1050" x2="1425" y2="1070">
          <stop offset="0" stopColor="#a9a9a9" />
          <stop offset=".3" stopColor="#aca8ac" />
          <stop offset=".68" stopColor="#e2cee4" />
          <stop offset="1" stopColor="#b9a9bb" />
        </linearGradient>
        <linearGradient id="fillet" x1="0" x2="1" y1="0" y2="0">
          <stop offset="0" stopColor="#b3abb4" />
          <stop offset=".6" stopColor="#e0cfe2" />
          <stop offset="1" stopColor="#cdbfd0" />
        </linearGradient>
        <linearGradient id="filletTop" x1="0" x2="0" y1="0" y2="1">
          <stop offset="0" stopColor="#fff" />
          <stop offset=".6" stopColor="#fff" />
          <stop offset="1" stopColor="#bdbdbd" />
        </linearGradient>
      </defs>

      {/* small cube */}
      <path d="M271 60l196 33 27 18 5 23 18 8 6 30-3 60-31 134-10 14-30 8-227-39-34-42 44-220z" fill="#fff" stroke="none" />
      <path d="M303 138l195 33-33 190-200-30z" fill="#a9a9a9" stroke="none" />
      <path d="M306 104l192 31v36l-195-33z" fill="url(#filletTop)" stroke="none" />
      <path d="M498 172l25 3-37 190-24-4z" fill="url(#fillet)" stroke="none" />
      <path d="M265 331l196 31-10 25-227-38z" fill="#838383" stroke="none" />
      <path d="M461 362l25 3-9 15-26 7z" fill="#777" stroke="none" />
      <path d="M271 60l196 33M235 86l36-26 33 45-38 25zM235 86l-45 220 34 43 42-220M304 105l-1 34-36-9M304 105l195 30M303 139l195 33M467 93l32 42-1 37-36 190-11 25M303 139l-38 192-41 18 227 39c16 0 28-8 35-22M265 331l196 31 25 4M498 172l25 3M499 135c16 3 25 15 24 40" />
      <path d="M523 175l-37 190" strokeDasharray="8 5" />
      <path d="M467 93c12 2 18 8 26 20" strokeWidth="2" />
      <ellipse cx="388" cy="100" rx="42" ry="10" transform="rotate(7 388 100)" />

      {/* housing */}
      <path d="M215 425L42 1278c10 20 70 38 151 50L362 476z" fill="url(#roundLeft)" stroke="none" />
      <path d="M362 476l1027 170-169 850L193 1327z" fill="#aaa" stroke="none" />
      <path d="M1389 640l110 6-170 850c-10 10-80 8-109 0z" fill="url(#roundRight)" stroke="none" />
      <path d="M215 425c5-12 60-12 130 0l1022 173c70 12 130 30 133 46-5 10-70 8-120 2L360 476c-70-10-145-33-145-51z" fill="#fff" />
      <path d="M266 436c10-10 50-4 80 0l1012 170c50 8 85 16 90 25-4 8-40 6-70 2L345 461c-40-6-76-15-79-25z" fill="#a9a9a9" />
      <path d="M268 436c10-9 40-5 62-2v25c-30-5-60-14-62-23z" fill="#cbb9cd" stroke="none" />
      <path d="M1358 606c50 8 85 16 90 25-4 8-50 6-90-2z" fill="#ececec" stroke="none" />
      <path d="M332 434v26M1358 606v25M362 476L193 1327M1389 646l-169 850M42 1278c15 20 70 38 151 49l1027 169c40 8 100 10 109 0" />

      {/* pointer with part badge */}
      <path d="M363 228v44l11-8 9 14 8-4-8-14 13-1z" fill="#fff" strokeWidth="2.500" />
      <path d="M398 284l12-6v-10l13-5 12 5v12l11 6v16l-13 9-35-20z" fill="#fbbe2e" stroke="#fff" strokeWidth="6" />
      <path d="M398 284l12-6v-10l13-5 12 5v12l11 6v16l-13 9-35-20zM410 278l16 9 7 5 13-6M423 270v15M433 292v18" fill="#fbbe2e" stroke="#7a5200" strokeWidth="2.200" />
    </svg>
  );
}

function Viewport() {
  return (
    <main className="relative min-w-0 flex-1 overflow-hidden bg-[linear-gradient(180deg,transparent_52%,rgba(255,255,255,.75)_65%,#fff_76%),radial-gradient(ellipse_43%_78%_at_80%_48%,#d6dde8,#dfe5ee_35%,#e8ecf3_60%,transparent),linear-gradient(180deg,#fff_25%,#dee3ed_54%)]">
      <div className="flex items-center justify-center pt-[7px] pr-1">
        {viewTools.map((t) => (
          <div key={t.label} className={clsx("flex items-center", t.faded && "text-[#c4c4c4]")}>
            <button aria-label={t.label} className="flex w-[27px] justify-center">
              <Icon name={t.icon} className="size-[19px]" />
            </button>
            {t.caret && (
              <span className="flex w-[15px] justify-center text-[#888]">
                <Caret />
              </span>
            )}
          </div>
        ))}
      </div>
      <Model />
      <svg viewBox="0 0 80 60" className="absolute top-[6px] right-[7px] h-[60px] w-20" aria-hidden="true">
        <path d="M3 17l7-6 4 5L26 3l6 5-17 19z" fill="#c9dcc8" />
        <path d="M50 37l6-5 7 7 7-7 6 5-7 8 7 8-6 5-7-7-7 7-6-5 7-8z" fill="#efbdbd" />
      </svg>
      <div className="absolute bottom-0 left-[39px] flex flex-col items-end">
        <span className="text-[10px] leading-3 font-bold text-[#6cc47a]">Y</span>
        <svg viewBox="0 0 16 34" className="h-[34px] w-3" aria-hidden="true">
          <path d="M10 1l6 13-4-1-3 21H2l4-21-6 0z" fill="#2f8f3c" />
        </svg>
      </div>
    </main>
  );
}

/* ---------- document window ---------- */

const docButtons: { label: string; art: ReactNode }[] = [
  { label: "左窗格", art: <><path d="M3 1h12v12H3z" fill="#fff" stroke="#333" strokeWidth="1.500" /><path d="M8 4H6v2M6 8v2h2M10 4h2v6h-2z" stroke="#333" /></> },
  { label: "右窗格", art: <><path d="M3 1h12v12H3z" fill="#fff" stroke="#333" strokeWidth="1.500" /><path d="M10 4h2v2M12 8v2h-2M6 4h2v6H6z" stroke="#333" /></> },
  { label: "最小化", art: <rect x="3.500" y="7" width="11" height="4" rx="1" fill="#fff" stroke="#333" /> },
  { label: "最大化", art: <><rect x="3.500" y="3" width="11" height="9" rx="1" fill="#fff" stroke="#333" strokeWidth="1.500" /><path d="M7 6.500h4v2H7z" fill="#fff" stroke="#333" /></> },
  { label: "关闭", art: <><path d="M5 3.500l8 8M13 3.500l-8 8" stroke="#333" strokeWidth="4.500" /><path d="M5 3.500l8 8M13 3.500l-8 8" stroke="#fff" strokeWidth="2" /></> },
];

function DocumentWindow() {
  return (
    <section className="isolate flex min-w-0 flex-1 flex-col rounded-t-md border-t-2 border-r-2 border-[#2e3640] border-t-[#3f454c] bg-[#d6e4f2]">
      <div className="flex h-[31px] items-center rounded-t bg-linear-to-b from-[#b5cbde] to-[#d6e5f3] pt-1 pr-2 pl-2.5">
        <Icon name="asm" className="size-[17px]" />
        <h2 className="ml-1 text-[13px] leading-4 text-[#8593a1]">装配体学习.SLDASM *</h2>
        <div className="ml-auto flex gap-[3px]">
          {docButtons.map((b) => (
            <button key={b.label} aria-label={b.label} className="flex h-[19px] w-8 items-center justify-center rounded-xs border border-[#7d8fa1] bg-[#c5d5e5]">
              <svg viewBox="0 0 18 15" fill="none" className="h-[15px] w-[18px]" aria-hidden="true">{b.art}</svg>
            </button>
          ))}
        </div>
      </div>
      <div className="flex min-h-0 flex-1 pr-1.5 pl-2">
        <PropertyManager />
        <Viewport />
      </div>
    </section>
  );
}

const paneTools = [
  { icon: "houseColor", label: "SOLIDWORKS 资源" },
  { icon: "library", label: "设计库" },
  { icon: "folder", label: "文件探索器" },
  { icon: "palette", label: "视图调色板" },
  { icon: "ball", label: "外观" },
  { icon: "props", label: "自定义属性" },
];

function TaskPane() {
  return (
    <div className="w-[78px] bg-linear-to-b from-[#e7e7e7] via-[#f3f3f3] to-white pt-[30px]">
      <div className="ml-auto w-[26px] border-t border-l border-[#666]">
        {paneTools.map((t, i) => (
          <button key={t.icon} aria-label={t.label} className={clsx("flex h-[25px] w-full items-center justify-center border-b border-[#666]", i === 0 ? "bg-white" : "bg-[#d6d6d6]")}>
            <Icon name={t.icon} className="size-[19px] text-[#333]" />
          </button>
        ))}
      </div>
    </div>
  );
}

/* ---------- video overlays ---------- */

function Watermark() {
  return (
    <div className="pointer-events-none absolute top-[41px] right-[231px] flex items-center gap-1">
      <p className="text-center text-[31px] leading-[37px] font-light text-[#6a6a6a]">
        2.插入零件方法
        <br />
        03:47-09:32
      </p>
      <p className="border border-[#8d0000] bg-[#fe0000] px-[7px] text-[35px] leading-[72px] text-white">阿奇设计分享</p>
    </div>
  );
}

function Subtitle() {
  return (
    <p className="pointer-events-none absolute inset-x-0 bottom-[94px] flex justify-center gap-16 pl-5 text-[43px] leading-[60px] font-medium text-white [-webkit-text-stroke:6px_#111] [paint-order:stroke_fill]">
      <span>选择这个零件</span>
      <span>然后将鼠标移动到装配体视窗</span>
    </p>
  );
}

const chapters = [
  { name: "装配体前言", width: "w-[6.75%]" },
  { name: "界面介绍", width: "w-[20.8%]" },
  { name: "插入零件的几种方法", width: "w-[38.2%]" },
  { name: "装配体基本功能介绍", width: "flex-1" },
];

function ChapterBar() {
  return (
    <div className="pointer-events-none absolute inset-x-0 bottom-0 h-[54px]">
      <div className="absolute inset-0 flex">
        <div className="w-[40.4%] bg-linear-to-b from-[#adb0b5]/0 to-[#adb0b5] to-50%" />
        <div className="flex-1 bg-linear-to-b from-black/0 to-black/60 to-65%" />
      </div>
      <ol className="relative flex h-full text-center text-[23px] leading-[53px] font-light whitespace-nowrap text-white">
        {chapters.map((c, i) => (
          <li key={c.name} className={clsx("relative", c.width)}>
            {c.name}
            {i < 3 && <span className="absolute inset-y-0 right-0 w-0.5 bg-linear-to-b from-white/10 via-white/60 to-white/10" />}
          </li>
        ))}
      </ol>
    </div>
  );
}

export default function App() {
  return (
    <div className="relative flex h-screen flex-col overflow-hidden bg-black px-[204px] font-['Noto_Sans_CJK_SC',sans-serif]">
      <TitleBar />
      <Ribbon />
      <RibbonTabs />
      <div className="flex min-h-0 flex-1 bg-[#e8e8e8]">
        <DocumentWindow />
        <TaskPane />
      </div>
      <footer className="flex h-5 items-center border-t border-[#333] bg-[#e8e8e8] text-[13px] leading-4 text-black">
        <span className="ml-auto">欠定义</span>
        <span className="ml-4">在编辑 装配体</span>
        <span className="ml-[121px] text-[#777]">自定义</span>
        <Caret className="ml-4 rotate-180" />
        <Icon name="tag" className="mr-[3px] ml-[26px] size-4" />
      </footer>
      <Watermark />
      <Subtitle />
      <ChapterBar />
      <p className="absolute right-[14px] bottom-2 font-[Roboto,sans-serif] text-[14px] leading-4 text-[#b5b5b5]">CSDN @Liebste.</p>
    </div>
  );
}
